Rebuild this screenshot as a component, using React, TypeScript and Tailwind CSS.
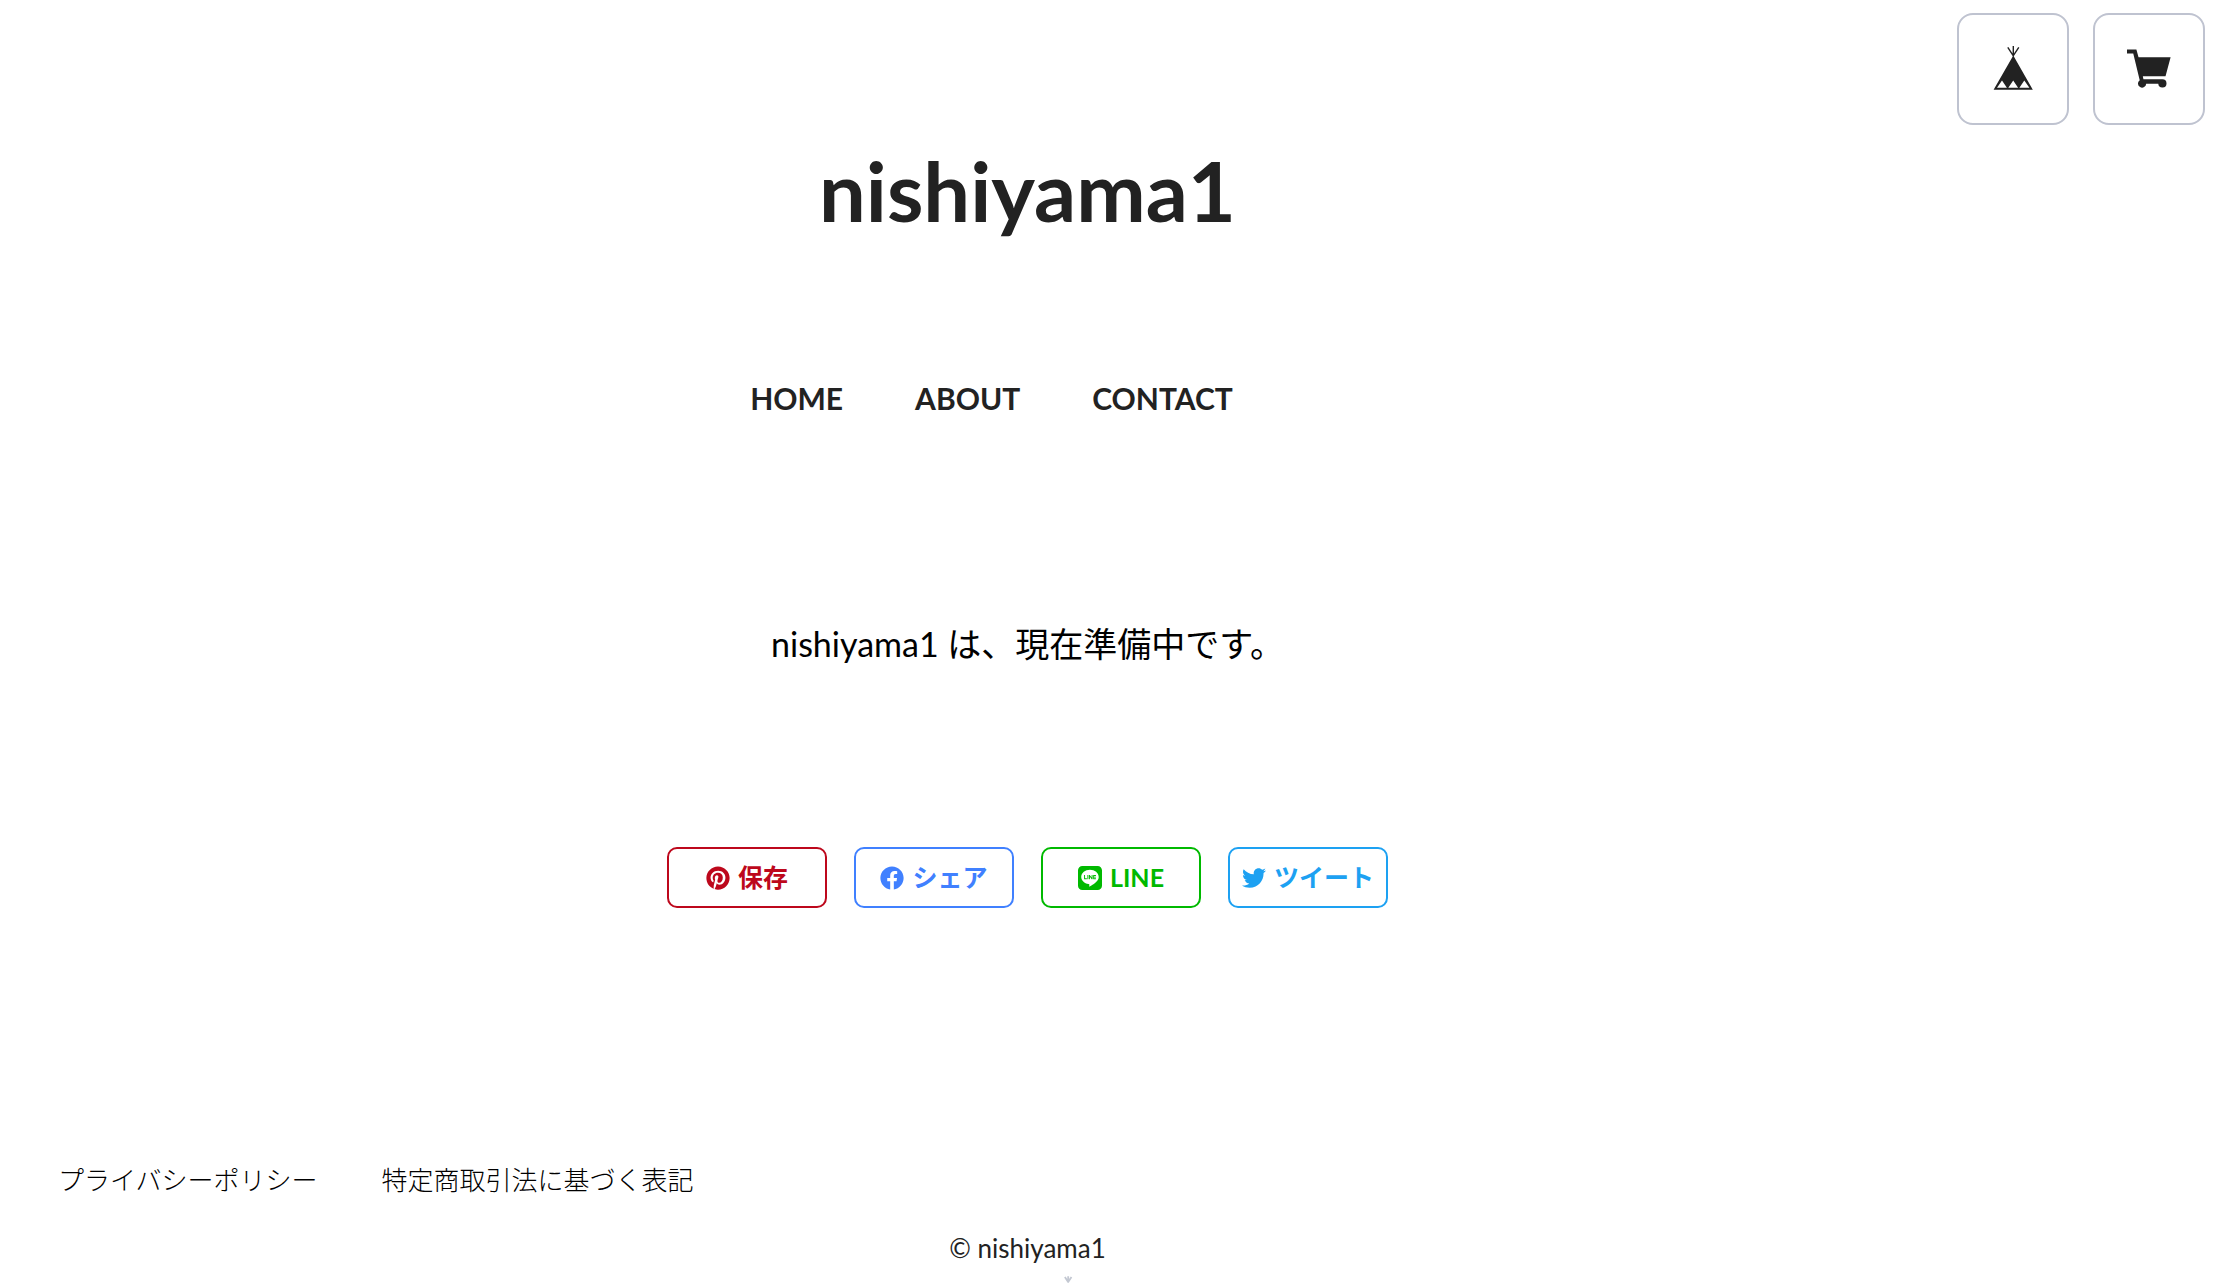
import { FaPinterest, FaFacebook, FaLine, FaTwitter } from "react-icons/fa";
import type { ReactNode } from "react";

function Tent({ className, poles }: { className: string; poles: number }) {
  return (
    <svg viewBox="0 0 40 46" className={className} fill="currentColor" aria-hidden="true">
      <path d="M14.8 1.4 20.5 10.2 M25.8 1.4 20 10.2 M20.3 0V10.5" stroke="currentColor" strokeWidth={poles} />
      <path fillRule="evenodd" d="M20.3 9.6 39.8 43.8H.6ZM9 34.6 4 41.8H13.9ZM20.2 34.6 15.3 41.8H25.1ZM31.3 34.6 26.4 41.8H36.4Z" />
    </svg>
  );
}

function Cart() {
  return (
    <svg viewBox="0 0 45 40" className="h-10 w-11" fill="currentColor" aria-hidden="true">
      <path d="M0 0H9.6L11.8 8H44.6L39.4 27.5H16.2L16.8 30.5H36.2A4.2 4.2 0 1 1 32 35H19.6A4.2 4.2 0 1 1 13 31.4L6.4 4.2H0Z" />
    </svg>
  );
}

function IconLink({ label, children }: { label: string; children: ReactNode }) {
  return (
    <a href="#" aria-label={label} className="flex size-28 items-center justify-center rounded-2xl border-2 border-[#bfc3d0] bg-white">
      {children}
    </a>
  );
}

const nav = ["HOME", "ABOUT", "CONTACT"];
const shares = [
  { label: "保存", Icon: FaPinterest, color: "border-[#bd081c] text-[#bd081c]", size: "size-6" },
  { label: "シェア", Icon: FaFacebook, color: "border-[#4080ff] text-[#4080ff]", size: "size-6" },
  { label: "LINE", Icon: FaLine, color: "border-[#00b900] text-[#00b900]", size: "h-7 w-6" },
  { label: "ツイート", Icon: FaTwitter, color: "border-[#1da1f2] text-[#1da1f2]", size: "size-6" },
];

export default function App() {
  return (
    <div className="relative bg-white font-['Lato','Noto_Sans_CJK_JP',sans-serif] text-[#222]">
      <div className="absolute top-[13px] right-2.5 flex gap-6">
        <IconLink label="BASE"><Tent className="h-[46px] w-10" poles={1.4} /></IconLink>
        <IconLink label="カート"><Cart /></IconLink>
      </div>
      <div className="mr-40">
        <header className="flex flex-col items-center pt-[142px]">
          <h1 className="text-[83px] leading-24 font-bold"><a href="#">nishiyama1</a></h1>
          <nav className="mt-34">
            <ul className="flex text-[30px] leading-12 font-bold">
              {nav.map((n) => <li key={n} className="mr-18"><a href="#">{n}</a></li>)}
            </ul>
          </nav>
        </header>
        <main className="flex flex-col items-center pt-[198px]">
          <p className="text-[34px] leading-12 text-black">nishiyama1 は、現在準備中です。</p>
          <div className="mt-[179px] flex gap-[27px]">
            {shares.map(({ label, Icon, color, size }) => (
              <a key={label} href="#" className={`flex h-[61px] w-40 items-center justify-center gap-2 rounded-[10px] border-2 text-[25px] font-bold ${color}`}>
                <Icon className={size} aria-hidden="true" />
                {label}
              </a>
            ))}
          </div>
        </main>
        <footer className="pt-62">
          <ul className="flex gap-16 pl-[58px] text-[26px] leading-12 font-light text-black">
            <li><a href="#">プライバシーポリシー</a></li>
            <li><a href="#">特定商取引法に基づく表記</a></li>
          </ul>
          <p className="mt-5 text-center text-[26px] leading-12">© nishiyama1</p>
          <a href="#" className="ml-[148px] flex items-start justify-center gap-2 text-2xl leading-10 font-bold text-[#c3c8d2]">
            <Tent className="mt-1 h-7 w-6" poles={3} />
            BASE
          </a>
        </footer>
      </div>
    </div>
  );
}
